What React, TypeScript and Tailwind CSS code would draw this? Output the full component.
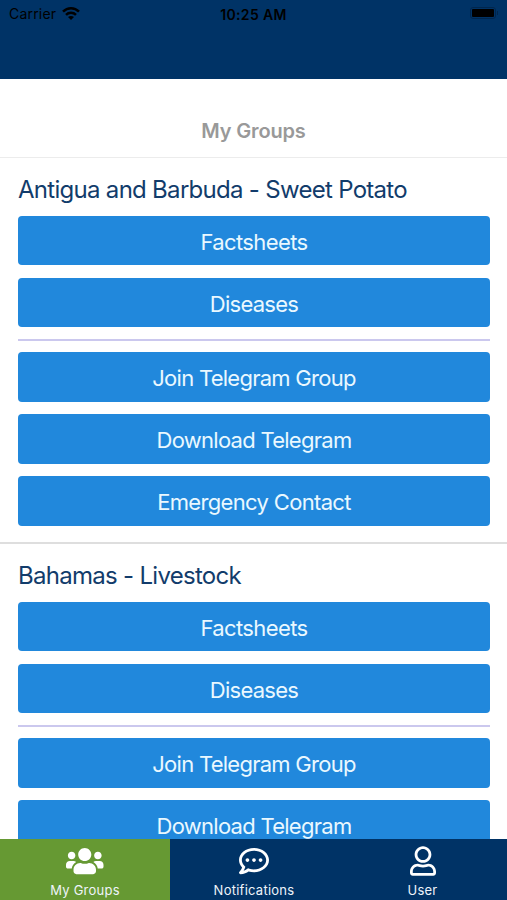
import { FaUsers, FaRegCommentDots, FaRegUser } from "react-icons/fa";

type ActionProps = { label: string; tracking: string };

function Action({ label, tracking }: ActionProps) {
  return (
    <button
      className={`flex h-[49.5px] w-full shrink-0 items-center justify-center rounded-[4px] bg-[#2188dc] pt-[2px] text-[22px] leading-7 whitespace-nowrap text-[#eaf8ff] ${tracking}`}
    >
      {label}
    </button>
  );
}

function Group({ title }: { title: string }) {
  return (
    <section className="h-[386.1px] shrink-0 border-b-2 border-[#dedede] pt-[17px] pr-[17px] pl-[18px]">
      <h2 className="h-[40.9px] text-[24px] leading-[30px] tracking-[-0.71px] whitespace-nowrap text-[#123c6b]">
        {title}
      </h2>
      <div className="flex flex-col gap-[12.4px]">
        <Action label="Factsheets" tracking="tracking-[-0.6px]" />
        <Action label="Diseases" tracking="tracking-[-0.75px]" />
      </div>
      <hr className="mt-[12px] mb-[11px] h-[2px] border-0 bg-[#cbc8ee]" />
      <div className="flex flex-col gap-[12.4px]">
        <Action label="Join Telegram Group" tracking="tracking-[-0.73px]" />
        <Action label="Download Telegram" tracking="tracking-[-0.73px]" />
        <Action label="Emergency Contact" tracking="tracking-[-0.67px]" />
      </div>
    </section>
  );
}

function StatusBar() {
  return (
    <div className="grid h-7 grid-cols-3 items-center px-[9px] text-black">
      <div className="flex items-center gap-[6px]">
        <span className="text-[14px] leading-7 tracking-[0.2px]">Carrier</span>
        <svg className="h-[14px] w-[18px]" viewBox="0 0 18 14" fill="none" stroke="black" strokeWidth="2.5">
          <path d="M1 4.7C5.5 .1 12.5 .1 17 4.7" />
          <path d="M4 7.9C6.8 5.1 11.2 5.1 14 7.9" />
          <path d="M9 13.1 6 10C7.7 8.5 10.3 8.5 12 10Z" fill="black" stroke="none" />
        </svg>
      </div>
      <div className="text-center text-[14px] font-semibold tracking-[0.35px] whitespace-nowrap">10:25 AM</div>
      <div className="flex items-center justify-end pb-[2px]">
        <div className="h-[12px] w-[26px] rounded-[3px] border border-[#00264d] p-px">
          <div className="h-full w-full rounded-[1px] bg-black" />
        </div>
        <div className="ml-px h-1 w-px bg-[#00264d]" />
      </div>
    </div>
  );
}

export default function App() {
  return (
    <div className="flex h-[900px] w-[507px] flex-col overflow-hidden bg-white font-['Inter',sans-serif]">
      <header className="h-[79px] shrink-0 bg-[#003366]">
        <StatusBar />
      </header>
      <div className="flex h-[79px] shrink-0 items-end justify-center border-b border-[#ececec] pb-[12px]">
        <h1 className="text-[20px] leading-7 font-semibold tracking-[-0.15px] text-[#999999]">My Groups</h1>
      </div>
      <main className="flex min-h-0 flex-1 flex-col overflow-hidden">
        <Group title="Antigua and Barbuda - Sweet Potato" />
        <Group title="Bahamas - Livestock" />
      </main>
      <nav className="grid h-[61px] shrink-0 grid-cols-[170px_168px_1fr] bg-[#003366] text-[13px] leading-4 tracking-[0.25px] text-[#eef4fa]">
        <a className="flex flex-col items-center bg-[#669933] pt-[7px]">
          <FaUsers className="h-[30px] w-[37.5px] text-white" />
          <span className="mt-[6px]">My Groups</span>
        </a>
        <a className="flex flex-col items-center pt-[7px]">
          <FaRegCommentDots className="h-[30px] w-[30px] text-white" />
          <span className="mt-[6px]">Notifications</span>
        </a>
        <a className="flex flex-col items-center pt-[7px]">
          <FaRegUser className="h-[30px] w-[26px] text-white" />
          <span className="mt-[6px]">User</span>
        </a>
      </nav>
    </div>
  );
}
